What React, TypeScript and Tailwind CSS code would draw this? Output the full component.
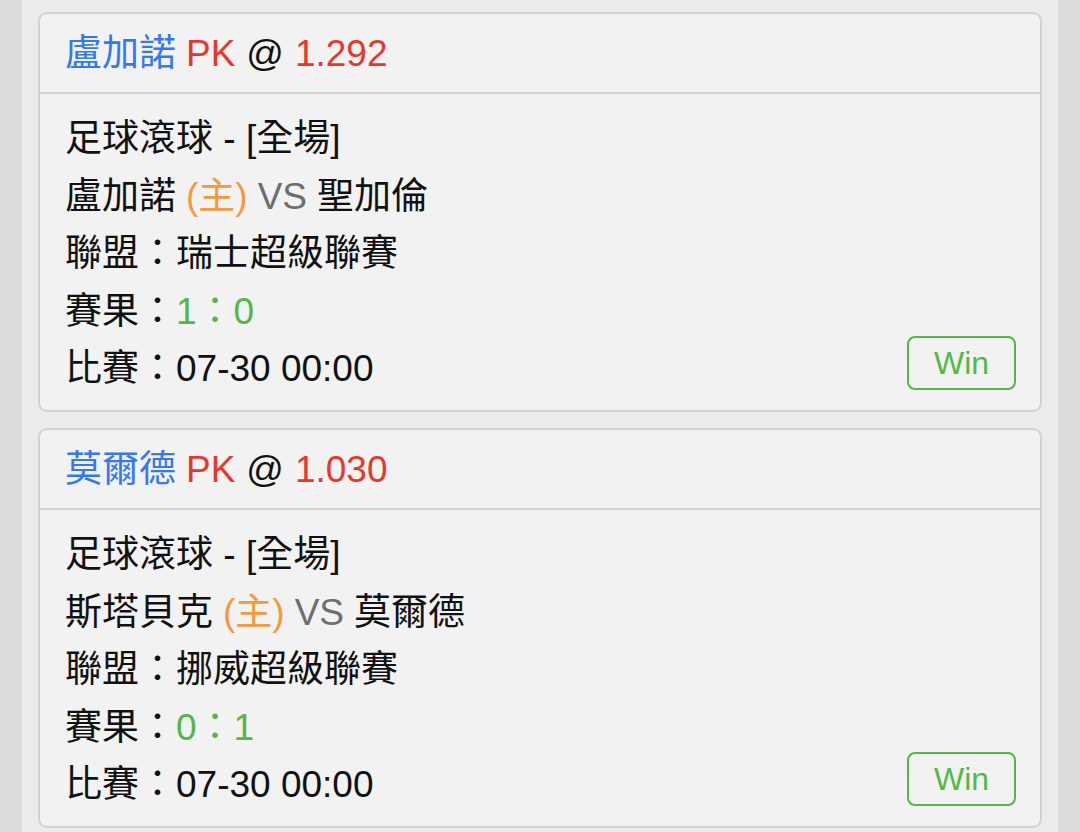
const bets = [
  {
    pick: "盧加諾",
    odds: "1.292",
    home: "盧加諾",
    away: "聖加倫",
    league: "瑞士超級聯賽",
    score: "1：0",
    time: "07-30 00:00",
  },
  {
    pick: "莫爾德",
    odds: "1.030",
    home: "斯塔貝克",
    away: "莫爾德",
    league: "挪威超級聯賽",
    score: "0：1",
    time: "07-30 00:00",
  },
];

type Bet = (typeof bets)[number];

const BetCard = ({ bet }: { bet: Bet }) => {
  return (
    <div className="h-[400px] shrink-0 rounded-[9px] border-2 border-[#d2d2d2] bg-[#f2f2f2]">
      {/* Header */}
      <div className="h-[80px] flex items-center px-[25px] pt-[2px] border-b-2 border-[#d2d2d2] text-[37px]">
        <span className="text-[#3478f6]">{bet.pick}</span>
        <span className="text-[#e9372c] ml-[10px]">PK</span>
        <span className="text-[#111] ml-[11px]">@</span>
        <span className="text-[#e9372c] ml-[11px]">{bet.odds}</span>
      </div>

      {/* Body */}
      <div className="px-[25px] pt-[16px] text-[37px] text-[#111]">
        <div className="h-[57.5px] flex items-center">足球滾球 - [全場]</div>
        <div className="h-[57.5px] flex items-center">
          {bet.home}
          <span className="text-[#f39a3e] ml-[10px]">(主)</span>
          <span className="text-[#6e6e6e] ml-[10px]">VS</span>
          <span className="ml-[10px]">{bet.away}</span>
        </div>
        <div className="h-[57.5px] flex items-center">聯盟：{bet.league}</div>
        <div className="h-[57.5px] flex items-center">
          賽果：<span className="text-[#53b845]">{bet.score}</span>
        </div>
        <div className="h-[57.5px] flex items-center justify-between">
          <span>比賽：{bet.time}</span>
          <div className="w-[109px] h-[54px] mr-[-1px] mb-[12px] rounded-[8px] border-2 border-[#53b845] flex items-center justify-center text-[32px] text-[#53b845]">
            Win
          </div>
        </div>
      </div>
    </div>
  );
};

const App = () => {
  return (
    <div
      className="w-full h-[832px] bg-[#dcdcdc] overflow-hidden"
      style={{ fontFamily: '"Liberation Sans", "Noto Sans CJK TC", sans-serif' }}
    >
      <div className="mx-[22px] h-full bg-[#ebebeb] px-4 pt-3 flex flex-col gap-4">
        {bets.map((bet, i) => (
          <BetCard key={i} bet={bet} />
        ))}
      </div>
    </div>
  );
};

export default App;
